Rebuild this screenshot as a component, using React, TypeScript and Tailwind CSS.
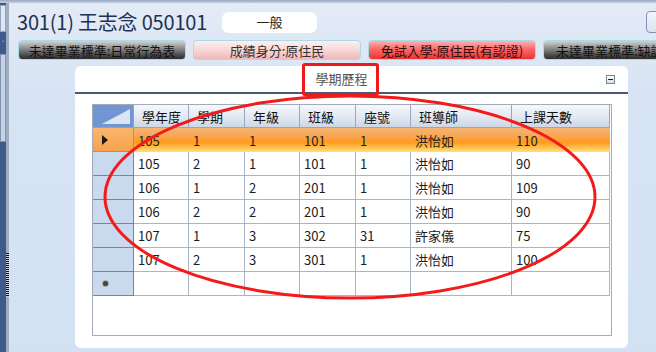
import React from "react";

const COLS = ["學年度", "學期", "年級", "班級", "座號", "班導師", "上課天數"];

const ROWS = [
  ["105", "1", "1", "101", "1", "洪怡如", "110"],
  ["105", "2", "1", "101", "1", "洪怡如", "90"],
  ["106", "1", "2", "201", "1", "洪怡如", "109"],
  ["106", "2", "2", "201", "1", "洪怡如", "90"],
  ["107", "1", "3", "302", "31", "許家儀", "75"],
  ["107", "2", "3", "301", "1", "洪怡如", "100"],
];

const GRID = "grid grid-cols-[41px_55px_56px_55px_56px_55px_101px_98px]";

function Badge({
  tone,
  left,
  children,
}: {
  tone: "dark" | "pink" | "red";
  left?: boolean;
  children: React.ReactNode;
}) {
  const bg =
    tone === "dark"
      ? "bg-[linear-gradient(#d2d2d2,#8e8e8e_40%,#505050_75%,#2c2c2c)] text-[#111]"
      : tone === "pink"
      ? "bg-[linear-gradient(#fdf0f0,#f8d6d6_50%,#efb8b8)] text-[#333]"
      : "bg-[linear-gradient(#ffb0b0,#fb6a6a_45%,#ee3030)] text-[#2a1010]";
  return (
    <div
      className={`flex h-[20px] shrink-0 items-center whitespace-nowrap rounded-[4px] border border-[#a8dbe6] text-[13px] leading-none ${
        left ? "w-[130px] justify-start pl-[12px]" : "w-[168px] justify-center"
      } ${bg}`}
    >
      {children}
    </div>
  );
}

export default function App() {
  return (
    <div className="relative h-[352px] w-[656px] overflow-hidden bg-[linear-gradient(#e3ebf6,#d6e3f3_30%,#d3e2f3)] font-['Noto_Sans_CJK_TC','Noto_Sans',sans-serif] text-[#1b1b1b]">
      <div className="h-[3px] bg-[linear-gradient(#9aa9c2,#c3cee0)]" />
      <div className="flex h-[349px]">
        {/* left scroll strip */}
        <div className="flex w-[9px] shrink-0">
          <div className="flex w-[6px] flex-col bg-[#3d5a8b]">
            <div className="mt-[2px] h-[27px] border border-[#8fa3c0] bg-[#dfe6f0]" />
            <div className="mt-[8px] h-[4px] text-center text-[6px] leading-none text-white">˄</div>
            <div className="mt-[10px] h-[88px] border border-[#7f93b3] bg-[#c6d2e2]" />
          </div>
          <div className="flex w-[3px] flex-col bg-[#9fadc1]">
            <div className="mt-[250px] h-[44px] bg-[repeating-linear-gradient(#111_0_1px,#c8d0dc_1px_2px)]" />
          </div>
        </div>

        <div className="flex min-w-0 flex-1 flex-col">
          {/* title row */}
          <div className="flex h-[36px] items-center pl-[8px] pt-[2px]">
            <span className="text-[20px] leading-none tracking-[-0.2px] text-[#1f3050]">
              301(1) 王志念 050101
            </span>
            <div className="ml-[15px] flex h-[21px] w-[95px] items-center justify-center rounded-[7px] bg-white text-[13px] text-[#222]">
              一般
            </div>
            <div className="ml-auto mr-[-30px] h-[22px] w-[40px] rounded-[4px] border border-[#8394b0] bg-[linear-gradient(#f4f7fb,#d8e2ef)]" />
          </div>

          {/* badge row */}
          <div className="mt-[1px] flex gap-[7px] pl-[9px]">
            <Badge tone="dark">未達畢業標準:日常行為表</Badge>
            <Badge tone="pink">成績身分:原住民</Badge>
            <Badge tone="red">免試入學:原住民(有認證)</Badge>
            <Badge tone="dark" left>
              未達畢業標準:缺課
            </Badge>
          </div>

          {/* panel */}
          <div className="ml-[66px] mt-[6px] flex h-[282px] w-[553px] flex-col rounded-[6px] bg-white">
            <div className="flex h-[28px] items-center border-b-2 border-[#4c5875]">
              <div className="flex-1 pl-[2px] text-center text-[13px] text-[#555]">學期歷程</div>
              <div className="mr-[13px] flex h-[9px] w-[9px] items-center justify-center border border-[#7a8598] bg-[linear-gradient(#ffffff,#d9dee6)]">
                <div className="h-[1px] w-[5px] bg-[#222]" />
              </div>
            </div>

            {/* data grid */}
            <div className="ml-[17px] mt-[10px] h-[232px] w-[520px] border border-[#a3aab8] bg-white text-[13px] leading-none">
              <div className={`${GRID} h-[23px]`}>
                <div className="relative border-r border-b border-[#8ea2c2] bg-[#7096d3]">
                  <div className="absolute bottom-[3px] right-[3px] h-0 w-0 border-b-[15px] border-l-[28px] border-b-[#dde5f1] border-l-transparent" />
                </div>
                {COLS.map((c) => (
                  <div
                    key={c}
                    className="flex items-center border-r border-b border-[#98a6bf] bg-[linear-gradient(#f6f8fc,#e4eaf3_50%,#cdd7e6)] pl-[8px] text-[#111]"
                  >
                    {c}
                  </div>
                ))}
              </div>

              {ROWS.map((r, i) => {
                const sel = i === 0;
                return (
                  <div key={i} className={`${GRID} h-[24px]`}>
                    <div
                      className={`flex items-center border-r border-b pl-[9px] ${
                        sel
                          ? "border-[#d88a35] bg-[linear-gradient(#f8b66e,#f9a14a)]"
                          : "border-[#6f86ad] bg-[#c9d9ee]"
                      }`}
                    >
                      {sel && (
                        <div className="h-0 w-0 border-y-[5px] border-l-[6px] border-y-transparent border-l-[#1a1a1a]" />
                      )}
                    </div>
                    {r.map((v, j) => (
                      <div
                        key={j}
                        className={`flex items-center pl-[4px] ${
                          sel
                            ? "bg-[linear-gradient(#f3b577,#f9a650_35%,#ff9a1c_60%,#ffd062_90%,#ffe07a)] text-[#222]"
                            : "border-r border-b border-[#a8b4c8]"
                        }`}
                      >
                        {v}
                      </div>
                    ))}
                  </div>
                );
              })}

              <div className={`${GRID} h-[24px]`}>
                <div className="flex items-center border-r border-b border-[#6f86ad] bg-[#c9d9ee] pl-[10px]">
                  <div className="h-[5px] w-[5px] rounded-full bg-[#444] ring-1 ring-[#aaa]" />
                </div>
                {COLS.map((c) => (
                  <div key={c} className="border-r border-b border-[#a8b4c8]" />
                ))}
              </div>
            </div>
          </div>
        </div>
      </div>

      {/* annotations */}
      <div className="pointer-events-none absolute left-[302px] top-[63px] h-[33px] w-[77px] rounded-[3px] border-[3px] border-[#f01818]" />
      <svg className="pointer-events-none absolute left-0 top-0" width="656" height="352">
        <ellipse cx="350" cy="197" rx="245" ry="101" fill="none" stroke="#f51a1a" strokeWidth="3" />
      </svg>
    </div>
  );
}
